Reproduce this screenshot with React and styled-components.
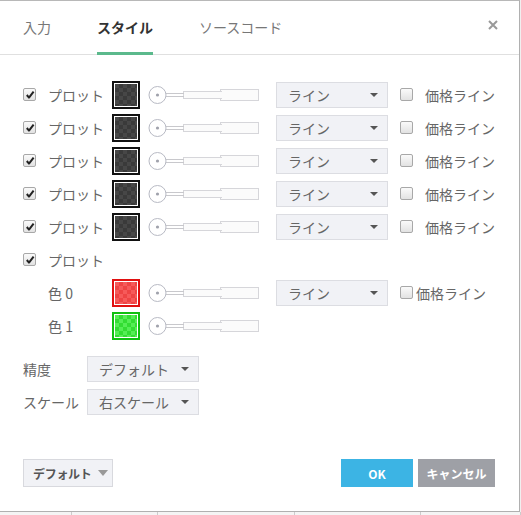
import styled, { createGlobalStyle } from 'styled-components'

const GlobalStyle = createGlobalStyle`
  html, body {
    margin: 0;
    padding: 0;
    background: #fff;
  }
  body {
    font-family: "Noto Sans CJK JP", "Noto Sans", sans-serif;
  }
`

const Page = styled.div`
  width: 521px;
  height: 515px;
  background: #f0f0f0;
  overflow: hidden;
`

const Dialog = styled.div`
  width: 520px;
  height: 512px;
  background: #fff;
  border-top: 1px solid #b8b8b8;
  border-right: 1px solid #b0b0b0;
  border-bottom: 1px solid #b0b0b0;
  box-sizing: border-box;
  display: flex;
  flex-direction: column;
`

const Header = styled.div`
  height: 53px;
  border-bottom: 1px solid #e0e0e0;
  display: flex;
  align-items: stretch;
  padding-left: 23px;
  padding-right: 21px;
  flex-shrink: 0;
`

const Tab = styled.div`
  display: flex;
  align-items: center;
  font-size: 14px;
  color: ${p => (p.$active ? '#333' : '#777')};
  font-weight: ${p => (p.$active ? 700 : 400)};
  margin-right: 46px;
  border-bottom: 3px solid ${p => (p.$active ? '#5bb98c' : 'transparent')};
  margin-bottom: -1px;
  box-sizing: border-box;
`

const Close = styled.div`
  margin-left: auto;
  display: flex;
  align-items: center;
  padding-bottom: 6px;
`

const Body = styled.div`
  padding: 23px 0 0 23px;
  flex: 1;
`

const PlotRow = styled.div`
  display: flex;
  align-items: center;
  height: 33px;
  padding-left: ${p => p.$indent || 0}px;
`

const Check = styled.span`
  width: 11px;
  height: 11px;
  border: 1px solid #a8a8a8;
  border-radius: 2px;
  background: linear-gradient(#fafafa, #e2e2e2);
  display: inline-flex;
  align-items: center;
  justify-content: center;
  flex-shrink: 0;
  box-sizing: content-box;
`

const Label = styled.span`
  font-size: 14px;
  color: #666;
  width: ${p => p.$w}px;
  flex-shrink: 0;
  margin-left: ${p => p.$ml || 0}px;
  white-space: nowrap;
`

const Swatch = styled.div`
  width: 28px;
  height: 28px;
  box-sizing: border-box;
  border: 2px solid ${p => p.$border};
  padding: 1px;
  background: #fff;
  flex-shrink: 0;
`

const Checker = styled.div`
  width: 100%;
  height: 100%;
  background: repeating-conic-gradient(${p => p.$a} 0 25%, ${p => p.$b} 0 50%) 0 0 / 8px 8px;
`

const SliderWrap = styled.div`
  margin-left: 8px;
  width: 112px;
  height: 20px;
  flex-shrink: 0;
`

const Select = styled.div`
  width: 112px;
  height: 26px;
  box-sizing: border-box;
  background: #f1f2f6;
  border: 1px solid #dcdde2;
  display: flex;
  align-items: center;
  padding: 0 9px 0 11px;
  font-size: 14px;
  color: #666;
  flex-shrink: 0;
  margin-left: ${p => p.$ml || 0}px;
  white-space: nowrap;
`

const Caret = styled.span`
  margin-left: auto;
  width: 0;
  height: 0;
  border-left: 4px solid transparent;
  border-right: 4px solid transparent;
  border-top: 4px solid #555;
`

const BigCaret = styled.span`
  width: 0;
  height: 0;
  border-left: 5px solid transparent;
  border-right: 5px solid transparent;
  border-top: 6px solid #999;
`

const SettingRow = styled.div`
  display: flex;
  align-items: center;
  height: 33px;
`

const Settings = styled.div`
  margin-top: 10px;
`

const Footer = styled.div`
  display: flex;
  align-items: center;
  padding: 0 24px 24px 23px;
  gap: 5px;
`

const DefaultBtn = styled.div`
  width: 90px;
  height: 28px;
  box-sizing: border-box;
  background: #f1f2f6;
  border: 1px solid #d8d9de;
  display: flex;
  align-items: center;
  padding: 0 0 0 9px;
  gap: 6px;
  font-size: 12px;
  font-weight: 700;
  letter-spacing: -0.3px;
  color: #555;
  margin-right: auto;
  white-space: nowrap;
`

const Btn = styled.div`
  width: ${p => p.$w}px;
  height: 28px;
  background: ${p => p.$bg};
  color: #fff;
  font-size: ${p => p.$fs || 12}px;
  font-weight: 700;
  display: flex;
  align-items: center;
  justify-content: center;
  white-space: nowrap;
`

const TableEdge = styled.div`
  height: 3px;
  display: flex;
`

const Cell = styled.div`
  width: ${p => p.$w}px;
  border-right: 1px solid #ccc;
  background: #f4f4f4;
`

function CheckMark() {
  return (
    <svg width="10" height="10" viewBox="0 0 10 10">
      <path d="M1.8 5 L4 7.6 L8.6 1.6" fill="none" stroke="#222" strokeWidth="2" strokeLinejoin="round" />
    </svg>
  )
}

function CloseIcon() {
  return (
    <svg width="10" height="10" viewBox="0 0 10 10">
      <path d="M1 1 L9 9 M9 1 L1 9" stroke="#999" strokeWidth="2" />
    </svg>
  )
}

function Slider() {
  return (
    <svg width="112" height="20" viewBox="0 0 112 20">
      <rect x="72.5" y="4.5" width="38" height="11" fill="#fbfbfb" stroke="#d6d6da" />
      <rect x="35.5" y="6.5" width="38" height="7" fill="#fbfbfb" stroke="#d6d6da" />
      <rect x="72" y="7" width="2" height="6" fill="#fbfbfb" />
      <line x1="18" y1="8.5" x2="36" y2="8.5" stroke="#c8c8cc" />
      <line x1="18" y1="11.5" x2="36" y2="11.5" stroke="#c8c8cc" />
      <circle cx="9.5" cy="10" r="8.5" fill="#fff" stroke="#b8bac4" />
      <circle cx="9.5" cy="10" r="1.6" fill="#a0a2ac" />
    </svg>
  )
}

const DARK = { border: '#111', a: '#3a3a3a', b: '#474747' }
const RED = { border: '#e01010', a: '#ee4444', b: '#f65a5a' }
const GREEN = { border: '#10c010', a: '#33dd33', b: '#55ee55' }

function ColorSwatch({ c }) {
  return (
    <Swatch $border={c.border}>
      <Checker $a={c.a} $b={c.b} />
    </Swatch>
  )
}

function PriceLine({ ml, labelMl }) {
  return (
    <>
      <Check style={{ marginLeft: ml }} />
      <Label $ml={labelMl}>価格ライン</Label>
    </>
  )
}

export default function App() {
  const plots = [0, 1, 2, 3, 4]
  return (
    <Page>
      <GlobalStyle />
      <Dialog>
        <Header>
          <Tab>入力</Tab>
          <Tab $active>スタイル</Tab>
          <Tab>ソースコード</Tab>
          <Close><CloseIcon /></Close>
        </Header>
        <Body>
          {plots.map(i => (
            <PlotRow key={i}>
              <Check><CheckMark /></Check>
              <Label $w={64} $ml={12}>プロット</Label>
              <ColorSwatch c={DARK} />
              <SliderWrap><Slider /></SliderWrap>
              <Select $ml={16}>ライン<Caret /></Select>
              <PriceLine ml={12} labelMl={12} />
            </PlotRow>
          ))}
          <PlotRow>
            <Check><CheckMark /></Check>
            <Label $w={64} $ml={12}>プロット</Label>
          </PlotRow>
          <PlotRow $indent={25}>
            <Label $w={64}>色 0</Label>
            <ColorSwatch c={RED} />
            <SliderWrap><Slider /></SliderWrap>
            <Select $ml={16}>ライン<Caret /></Select>
            <PriceLine ml={12} labelMl={3} />
          </PlotRow>
          <PlotRow $indent={25}>
            <Label $w={64}>色 1</Label>
            <ColorSwatch c={GREEN} />
            <SliderWrap><Slider /></SliderWrap>
          </PlotRow>
          <Settings>
            <SettingRow>
              <Label $w={64}>精度</Label>
              <Select>デフォルト<Caret /></Select>
            </SettingRow>
            <SettingRow>
              <Label $w={64}>スケール</Label>
              <Select>右スケール<Caret /></Select>
            </SettingRow>
          </Settings>
        </Body>
        <Footer>
          <DefaultBtn>デフォルト<BigCaret /></DefaultBtn>
          <Btn $w={72} $bg="#3cb4e4">OK</Btn>
          <Btn $w={77} $bg="#9ea0a6">キャンセル</Btn>
        </Footer>
      </Dialog>
      <TableEdge>
        <Cell $w={72} />
        <Cell $w={85} />
        <Cell $w={138} />
        <Cell $w={126} />
        <Cell $w={100} />
      </TableEdge>
    </Page>
  )
}
